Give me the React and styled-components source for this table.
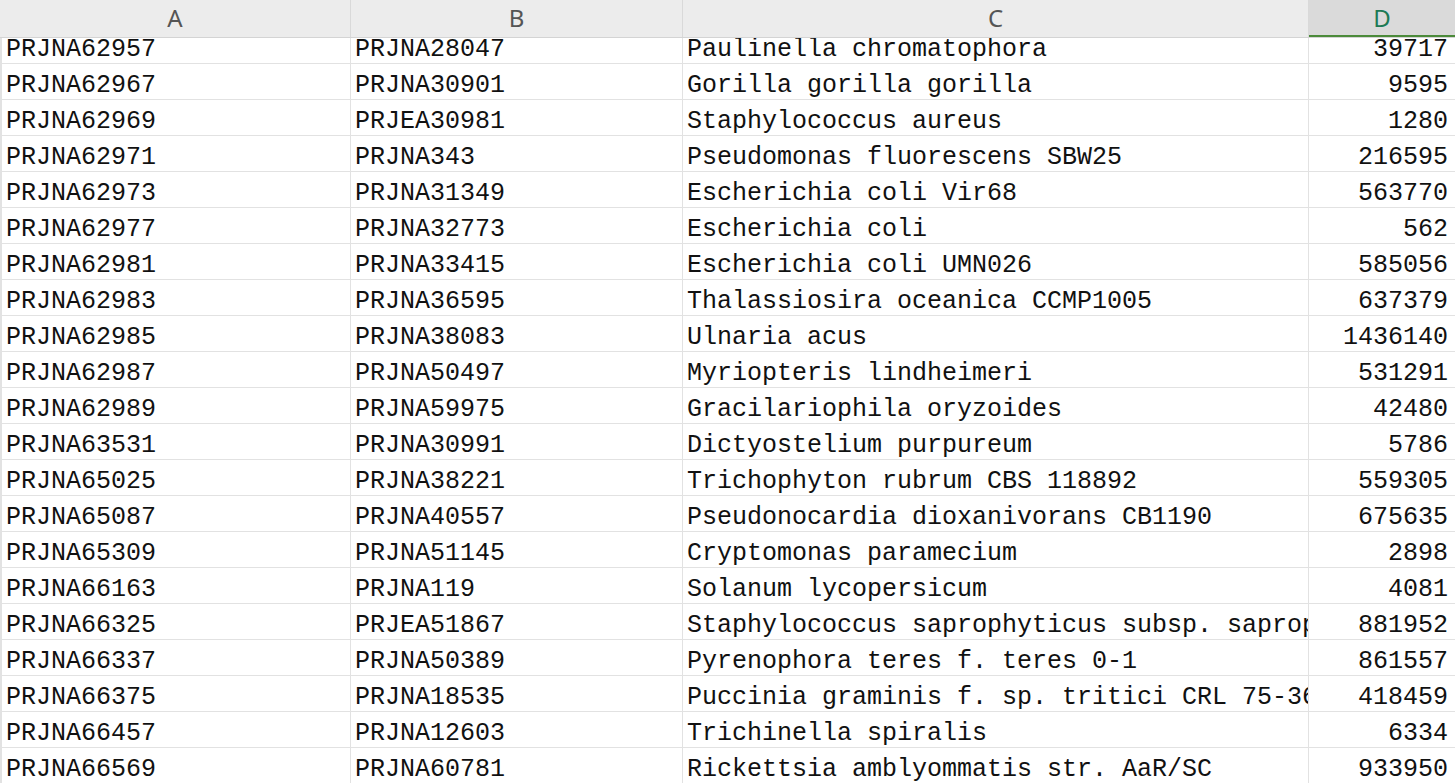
import React from "react";
import styled, { createGlobalStyle } from "styled-components";

const rows = [
  ["PRJNA62957", "PRJNA28047", "Paulinella chromatophora", "39717"],
  ["PRJNA62967", "PRJNA30901", "Gorilla gorilla gorilla", "9595"],
  ["PRJNA62969", "PRJEA30981", "Staphylococcus aureus", "1280"],
  ["PRJNA62971", "PRJNA343", "Pseudomonas fluorescens SBW25", "216595"],
  ["PRJNA62973", "PRJNA31349", "Escherichia coli Vir68", "563770"],
  ["PRJNA62977", "PRJNA32773", "Escherichia coli", "562"],
  ["PRJNA62981", "PRJNA33415", "Escherichia coli UMN026", "585056"],
  ["PRJNA62983", "PRJNA36595", "Thalassiosira oceanica CCMP1005", "637379"],
  ["PRJNA62985", "PRJNA38083", "Ulnaria acus", "1436140"],
  ["PRJNA62987", "PRJNA50497", "Myriopteris lindheimeri", "531291"],
  ["PRJNA62989", "PRJNA59975", "Gracilariophila oryzoides", "42480"],
  ["PRJNA63531", "PRJNA30991", "Dictyostelium purpureum", "5786"],
  ["PRJNA65025", "PRJNA38221", "Trichophyton rubrum CBS 118892", "559305"],
  ["PRJNA65087", "PRJNA40557", "Pseudonocardia dioxanivorans CB1190", "675635"],
  ["PRJNA65309", "PRJNA51145", "Cryptomonas paramecium", "2898"],
  ["PRJNA66163", "PRJNA119", "Solanum lycopersicum", "4081"],
  ["PRJNA66325", "PRJEA51867", "Staphylococcus saprophyticus subsp. saprophyticus ATCC 15305", "881952"],
  ["PRJNA66337", "PRJNA50389", "Pyrenophora teres f. teres 0-1", "861557"],
  ["PRJNA66375", "PRJNA18535", "Puccinia graminis f. sp. tritici CRL 75-36-700-3", "418459"],
  ["PRJNA66457", "PRJNA12603", "Trichinella spiralis", "6334"],
  ["PRJNA66569", "PRJNA60781", "Rickettsia amblyommatis str. AaR/SC", "933950"],
];

const columns = ["A", "B", "C", "D"];

const Global = createGlobalStyle`
  html, body { margin: 0; padding: 0; background: #fff; overflow: hidden; }
`;

const Sheet = styled.div`
  width: 1455px;
  height: 783px;
  overflow: hidden;
  display: flex;
  flex-direction: column;
  background: #fff;
`;

const HeaderRow = styled.div`
  display: grid;
  grid-template-columns: 351px 332px 626px 1fr;
  height: 38px;
  flex: none;
  background: #ececec;
  border-bottom: 1px solid #d4d4d4;
  box-sizing: border-box;
`;

const HeaderCell = styled.div`
  display: flex;
  align-items: center;
  justify-content: center;
  font-family: "Noto Sans", "Open Sans", sans-serif;
  font-size: 24px;
  color: ${(p) => (p.$active ? "#1d7a55" : "#555")};
  background: ${(p) => (p.$active ? "#dadada" : "transparent")};
  border-right: 1px solid #d9d9d9;
  box-shadow: ${(p) => (p.$active ? "inset 0 -2px 0 #4b8a3a" : "none")};
  padding-bottom: 2px;
  &:last-child { border-right: none; }
`;

const Body = styled.div`
  flex: 1;
  overflow: hidden;
  border-left: 2px solid #e2e2e2;
`;

const Rows = styled.div`
  margin-top: -10px;
`;

const Row = styled.div`
  display: grid;
  grid-template-columns: 349px 332px 626px 1fr;
  height: 36px;
  border-bottom: 1px solid #e2e2e2;
  box-sizing: border-box;
`;

const Cell = styled.div`
  display: flex;
  align-items: center;
  justify-content: ${(p) => (p.$num ? "flex-end" : "flex-start")};
  padding: 7px ${(p) => (p.$num ? "7px" : "0")} 0 ${(p) => (p.$num ? "0" : "4px")};
  font-family: "Liberation Mono", "DejaVu Sans Mono", monospace;
  font-size: 25px;
  color: #111;
  white-space: pre;
  overflow: hidden;
  border-right: 1px solid #e2e2e2;
  &:last-child { border-right: none; }
`;

export default function App() {
  return (
    <Sheet>
      <Global />
      <HeaderRow>
        {columns.map((c) => (
          <HeaderCell key={c} $active={c === "D"}>
            {c}
          </HeaderCell>
        ))}
      </HeaderRow>
      <Body>
        <Rows>
          {rows.map((r) => (
            <Row key={r[0]}>
              <Cell>{r[0]}</Cell>
              <Cell>{r[1]}</Cell>
              <Cell>{r[2]}</Cell>
              <Cell $num>{r[3]}</Cell>
            </Row>
          ))}
        </Rows>
      </Body>
    </Sheet>
  );
}
